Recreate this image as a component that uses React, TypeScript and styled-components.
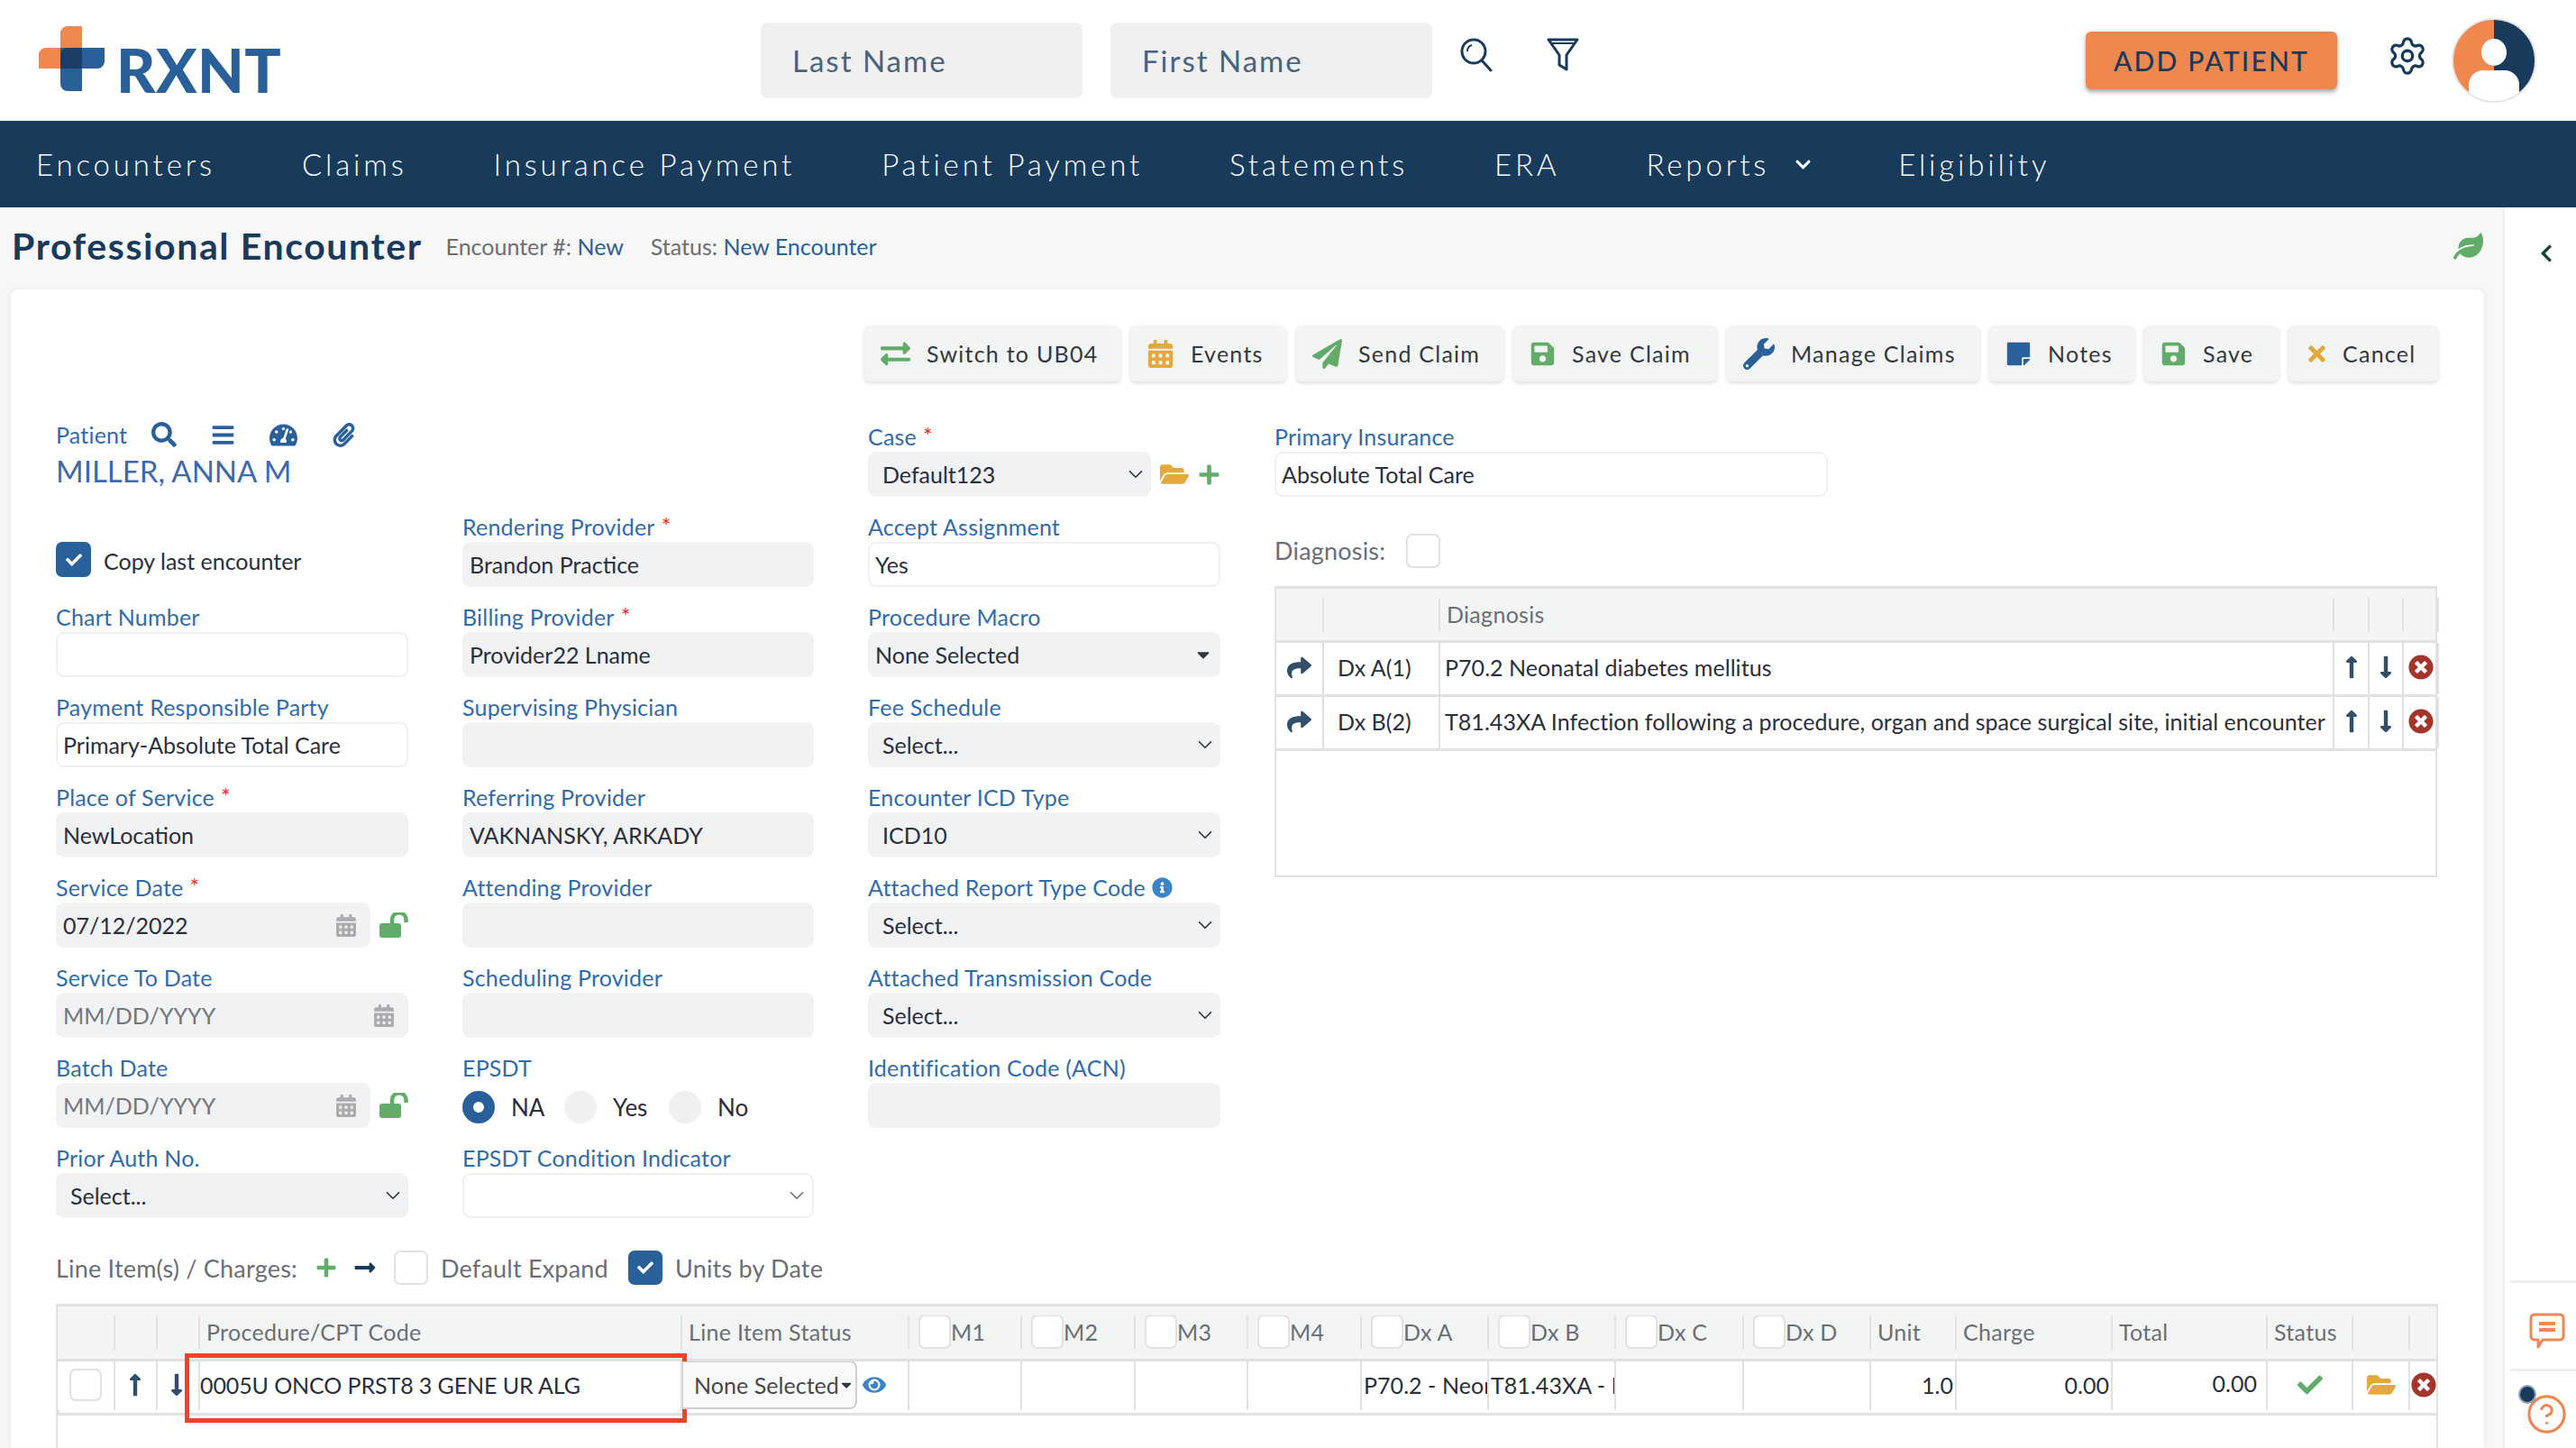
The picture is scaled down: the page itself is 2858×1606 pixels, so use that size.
import React from 'react'
import styled, { createGlobalStyle } from 'styled-components'
import {
  FaCalendarAlt,
  FaBars,
  FaCaretDown,
  FaCheck,
  FaChevronDown,
  FaChevronLeft,
  FaExchangeAlt,
  FaEye,
  FaFolderOpen,
  FaInfoCircle,
  FaLeaf,
  FaLongArrowAltDown,
  FaLongArrowAltRight,
  FaLongArrowAltUp,
  FaPaperPlane,
  FaPaperclip,
  FaPlus,
  FaSave,
  FaSearch,
  FaShare,
  FaStickyNote,
  FaTachometerAlt,
  FaTimes,
  FaTimesCircle,
  FaWrench,
} from 'react-icons/fa'
import { ChevronDown, CircleHelp, Settings } from 'lucide-react'

const GlobalStyle = createGlobalStyle`
  html, body {
    margin: 0;
    padding: 0;
    background: #fff;
  }
  * {
    box-sizing: border-box;
  }
`

const navy = '#183a5b'
const blue = '#2a6099'
const orange = '#f0874f'
const green = '#62ac69'
const amber = '#e5a83e'
const red = '#a4352c'
const line = '#e0e2e2'
const labelBlue = '#2f6cab'
const ink = '#2a2f3c'

const Page = styled.div`
  width: 2858px;
  height: 1606px;
  overflow: hidden;
  display: flex;
  flex-direction: column;
  font-family: 'Lato', 'Liberation Sans', sans-serif;
  font-size: 25px;
  color: ${ink};
`

const Header = styled.header`
  height: 134px;
  flex: none;
  display: flex;
  align-items: center;
  padding: 0 43px 0 43px;
`

const LogoWrap = styled.div`
  width: 801px;
  display: flex;
  align-items: flex-end;
  height: 72px;
  margin-top: -4px;
`

const LogoText = styled.span`
  font-size: 67px;
  font-weight: 900;
  line-height: 48px;
  height: 48px;
  color: ${blue};
  letter-spacing: 0.5px;
  margin-left: 13px;
`

const SearchInput = styled.input`
  width: 357px;
  height: 84px;
  border: 0;
  outline: 0;
  border-radius: 8px;
  background: #f0f0f0;
  padding: 0 35px;
  margin-right: 31px;
  font-family: inherit;
  font-size: 33px;
  letter-spacing: 2px;
  &::placeholder {
    color: #47637d;
    opacity: 1;
  }
`

const HeaderIcon = styled.svg<{ $gap?: number }>`
  flex: none;
  margin-top: -12px;
  margin-left: ${(p) => p.$gap ?? 0}px;
`

const AddPatient = styled.button`
  margin-left: auto;
  width: 279px;
  height: 64px;
  border: 0;
  border-radius: 6px;
  background: ${orange};
  box-shadow: 0 3px 5px rgba(0, 0, 0, 0.35);
  color: ${navy};
  font-family: inherit;
  font-size: 30px;
  font-weight: 500;
  letter-spacing: 2.2px;
  white-space: nowrap;
  padding: 0;
`

const GearWrap = styled.div`
  display: flex;
  margin: -10px 25px 0 55px;
  color: ${navy};
`

const Nav = styled.nav`
  height: 96px;
  flex: none;
  background: ${navy};
  display: flex;
  align-items: center;
  padding-left: 40px;
  gap: 96px;
`

const NavItem = styled.a`
  display: flex;
  align-items: center;
  gap: 28px;
  color: #fff;
  font-size: 33px;
  font-weight: 300;
  letter-spacing: 3.85px;
  white-space: nowrap;
`

const Body = styled.div`
  flex: 1;
  min-height: 0;
  display: flex;
`

const Main = styled.main`
  width: 2777px;
  flex: none;
  background: #f7f7f7;
  padding: 0 21px 0 12px;
  display: flex;
  flex-direction: column;
`

const TitleRow = styled.div`
  height: 91px;
  flex: none;
  display: flex;
  align-items: center;
  padding: 0 1px 6px 1px;
`

const Title = styled.h1`
  margin: 0 26px 0 0;
  font-size: 41px;
  font-weight: 700;
  color: ${navy};
  letter-spacing: 1.6px;
  white-space: nowrap;
`

const Meta = styled.span`
  color: #6a6f76;
  font-size: 25px;
  margin-right: 30px;
  & b {
    font-weight: 400;
    color: ${blue};
  }
`

const LeafIcon = styled(FaLeaf)`
  margin-left: auto;
  width: 33px;
  height: 30px;
  color: ${green};
`

const Card = styled.section`
  flex: 1;
  min-height: 0;
  background: #fff;
  border-radius: 8px 8px 0 0;
  box-shadow: 0 0 6px rgba(0, 0, 0, 0.07);
  padding: 40px 51px 0 50px;
  display: flex;
  flex-direction: column;
`

const Toolbar = styled.div`
  display: flex;
  justify-content: flex-end;
  gap: 11px;
  height: 62px;
  flex: none;
  margin-bottom: 44px;
`

const ToolButton = styled.button<{ $w: number; $gap?: number }>`
  width: ${(p) => p.$w}px;
  height: 62px;
  display: flex;
  align-items: center;
  gap: ${(p) => p.$gap ?? 18}px;
  padding: 0 0 0 18px;
  border: 0;
  border-radius: 6px;
  background: #f3f5f4;
  box-shadow: 0 2px 4px rgba(0, 0, 0, 0.14);
  font-family: inherit;
  font-size: 25px;
  letter-spacing: 1.25px;
  color: #33373f;
  white-space: nowrap;
`

const FormGrid = styled.div`
  display: grid;
  grid-template-columns: 391px 390px 391px 1290px;
  column-gap: 60px;
  height: 900px;
  flex: none;
`

const Column = styled.div`
  display: flex;
  flex-direction: column;
  min-width: 0;
`

const PatientBlock = styled.div`
  height: 134px;
  flex: none;
  padding-top: 3px;
`

const PatientRow = styled.div`
  height: 24px;
  display: flex;
  align-items: center;
  gap: 27px;
  color: ${labelBlue};
  letter-spacing: 0.2px;
`

const PatientIcons = styled.span`
  display: flex;
  align-items: center;
  gap: 38px;
  color: ${blue};
`

const PatientName = styled.div`
  height: 44px;
  line-height: 44px;
  margin-top: 6px;
  font-size: 33px;
  color: #3f68b0;
  white-space: nowrap;
`

const CopyRow = styled.label`
  height: 66px;
  flex: none;
  display: flex;
  align-items: flex-start;
  gap: 14px;
  line-height: 42px;
`

const Check = styled.span<{ $on?: boolean; $size?: number }>`
  width: ${(p) => p.$size ?? 38}px;
  height: ${(p) => p.$size ?? 38}px;
  flex: none;
  display: inline-flex;
  align-items: center;
  justify-content: center;
  border-radius: 7px;
  background: ${(p) => (p.$on ? blue : '#fff')};
  border: ${(p) => (p.$on ? '0' : `2px solid ${line}`)};
  color: #fff;
`

const Spacer = styled.div`
  height: 100px;
  flex: none;
`

const FieldWrap = styled.div`
  height: 100px;
  flex: none;
`

const Label = styled.div`
  height: 34px;
  line-height: 34px;
  color: ${labelBlue};
  white-space: nowrap;
  letter-spacing: 0.2px;
  display: flex;
  align-items: center;
  gap: 7px;
  & i {
    color: #ee2b24;
    font-style: normal;
    margin-top: -3px;
  }
`

const InputRow = styled.div`
  display: flex;
  align-items: center;
  gap: 10px;
`

const Box = styled.div<{ $white?: boolean; $pad?: number; $muted?: boolean }>`
  flex: 1;
  min-width: 0;
  height: 50px;
  border-radius: 9px;
  display: flex;
  align-items: center;
  white-space: nowrap;
  padding: 0 8px 0 ${(p) => p.$pad ?? (p.$white ? 6 : 8)}px;
  background: ${(p) => (p.$white ? '#fff' : '#f1f2f4')};
  border: ${(p) => (p.$white ? '2px solid #eff0f1' : '0')};
  color: ${(p) => (p.$muted ? '#73777d' : ink)};
  & > svg {
    margin-left: auto;
  }
`

const InsuranceBox = styled(Box)`
  width: 614px;
  flex: none;
`

const CalendarGlyph = styled(FaCalendarAlt)`
  width: 22px;
  height: 25px;
  color: #a9abad;
  margin-right: 8px;
`

const Chevron = styled(ChevronDown)<{ $faint?: boolean }>`
  color: ${(p) => (p.$faint ? '#70757c' : '#33373f')};
  margin-right: -4px;
`

const UnlockSvg = styled.svg`
  flex: none;
  width: 32px;
  height: 28px;
  color: ${green};
`

const RadioRow = styled.div`
  height: 50px;
  margin-top: 2px;
  display: flex;
  align-items: center;
  font-size: 26px;
`

const Radio = styled.span<{ $on?: boolean }>`
  width: 36px;
  height: 36px;
  border-radius: 50%;
  flex: none;
  background: ${(p) => (p.$on ? '#fff' : '#f0f0f0')};
  border: ${(p) => (p.$on ? `12px solid ${blue}` : '0')};
  margin-right: 18px;
`

const RadioText = styled.span<{ $w: number }>`
  width: ${(p) => p.$w}px;
`

const DiagnosisRow = styled.div`
  display: flex;
  align-items: center;
  gap: 23px;
  height: 39px;
  margin: 24px 0 20px;
  color: #6a6f76;
  font-size: 27px;
  letter-spacing: 0.2px;
`

const GridTable = styled.div<{ $h?: number; $grow?: boolean }>`
  border: 2px solid ${line};
  border-top-width: 3px;
  ${(p) => (p.$h ? `height: ${p.$h}px;` : '')}
  ${(p) => (p.$grow ? 'flex: 1; border-bottom: 0;' : '')}
`

const TableRow = styled.div<{ $cols: string; $head?: boolean; $h: number }>`
  display: grid;
  grid-template-columns: ${(p) => p.$cols};
  height: ${(p) => p.$h}px;
  background: ${(p) => (p.$head ? '#f3f5f4' : '#fff')};
  border-bottom: 3px solid ${line};
`

const HeadCell = styled.div`
  align-self: start;
  margin-top: 10px;
  height: 38px;
  display: flex;
  align-items: center;
  padding: 0 0 2px 7px;
  border-left: 2px solid ${line};
  color: #6a6f76;
  letter-spacing: 0.3px;
  white-space: nowrap;
  overflow: hidden;
  &:first-child {
    border-left: 0;
  }
`

const Cell = styled.div<{ $align?: string; $pad?: string }>`
  display: flex;
  align-items: center;
  justify-content: ${(p) => p.$align ?? 'flex-start'};
  padding: ${(p) => p.$pad ?? '0 0 3px'};
  border-left: 2px solid ${line};
  letter-spacing: 0.05px;
  white-space: nowrap;
  overflow: hidden;
  min-width: 0;
  position: relative;
  &:first-child {
    border-left: 0;
  }
`

const HighlightCell = styled(Cell)`
  overflow: visible;
  letter-spacing: -0.1px;
`

const Highlight = styled.span`
  position: absolute;
  top: -9px;
  bottom: -14px;
  left: -17px;
  right: -7px;
  border: 5px solid #ee4425;
  pointer-events: none;
`

const Arrow = styled.span`
  display: inline-flex;
  color: #2f4f6b;
`

const RemoveIcon = styled(FaTimesCircle)`
  width: 28px;
  height: 28px;
  color: ${red};
`

const ChargesRow = styled.div`
  height: 38px;
  flex: none;
  margin: 20px 0 21px;
  display: flex;
  align-items: center;
  color: #6a6f76;
  font-size: 27px;
  letter-spacing: 0.2px;
`

const ChargesText = styled.span<{ $w: number }>`
  width: ${(p) => p.$w}px;
  flex: none;
  white-space: nowrap;
`

const ChargeArrow = styled(FaLongArrowAltRight)`
  margin: 0 19px 0 18px;
  color: ${navy};
`

const ChargeCheck = styled(Check)`
  margin-right: 14px;
`

const StatusSelect = styled.div`
  width: 194px;
  height: 54px;
  flex: none;
  display: flex;
  align-items: center;
  justify-content: space-between;
  padding: 0 2px 0 12px;
  border: 2px solid #cfd0d1;
  border-left-width: 1px;
  border-radius: 0 8px 8px 0;
  background: #fafafa;
  color: #45484e;
`

const EyeIcon = styled(FaEye)`
  width: 26px;
  height: 26px;
  margin-left: 6px;
  color: #3a85c9;
`

const Sidebar = styled.aside`
  flex: 1;
  background: #fff;
  border-left: 2px solid #ececec;
  display: flex;
  flex-direction: column;
  position: relative;
`

const SideTop = styled.div`
  height: 91px;
  flex: none;
  display: flex;
  align-items: center;
  padding: 10px 0 0 35px;
  color: #17443a;
`

const SideDivider = styled.div<{ $top: number }>`
  height: 3px;
  flex: none;
  background: #eeeeee;
  margin: ${(p) => p.$top}px 0 0 6px;
`

const SideIcon = styled.div<{ $top: number; $left: number }>`
  margin: ${(p) => p.$top}px 0 0 ${(p) => p.$left}px;
  display: flex;
  position: relative;
  color: ${orange};
`

const NoticeDot = styled.span`
  position: absolute;
  left: -8px;
  top: -9px;
  width: 20px;
  height: 21px;
  border-radius: 50%;
  background: ${navy};
  border: 2px solid #8fa3b5;
`

type FieldProps = {
  label: React.ReactNode
  required?: boolean
  children?: React.ReactNode
}

const Field = ({ label, required, children }: FieldProps) => (
  <FieldWrap>
    <Label>
      {label}
      {required && <i>*</i>}
    </Label>
    {children}
  </FieldWrap>
)

const TextField = ({
  label,
  value,
  required,
  white,
}: FieldProps & { value?: string; white?: boolean }) => (
  <Field label={label} required={required}>
    <Box $white={white}>{value}</Box>
  </Field>
)

const SelectField = ({
  label,
  value,
  required,
  white,
}: FieldProps & { value?: string; white?: boolean }) => (
  <Field label={label} required={required}>
    <Box $pad={16} $white={white}>
      {value}
      <Chevron size={26} strokeWidth={1.6} $faint={white} />
    </Box>
  </Field>
)

const UnlockIcon = () => (
  <UnlockSvg viewBox="0 0 32 28">
    <rect x="0" y="12" width="24" height="16" rx="3" fill="currentColor" />
    <path d="M14 13V8a6.5 6.5 0 0 1 15.5 0v3" fill="none" stroke="currentColor" strokeWidth="4.5" />
  </UnlockSvg>
)

const DateField = ({
  label,
  value,
  required,
  unlock,
}: FieldProps & { value: string; unlock?: boolean }) => (
  <Field label={label} required={required}>
    <InputRow>
      <Box $muted={value === 'MM/DD/YYYY'}>
        {value}
        <CalendarGlyph />
      </Box>
      {unlock && <UnlockIcon />}
    </InputRow>
  </Field>
)

const tools = [
  { label: 'Switch to UB04', w: 284, icon: <FaExchangeAlt size={33} color={green} /> },
  { label: 'Events', w: 173, icon: <FaCalendarAlt size={31} color={amber} /> },
  { label: 'Send Claim', w: 230, icon: <FaPaperPlane size={33} color={green} /> },
  { label: 'Save Claim', w: 226, icon: <FaSave size={29} color={green} /> },
  { label: 'Manage Claims', w: 280, icon: <FaWrench size={35} color={blue} /> },
  { label: 'Notes', w: 161, icon: <FaStickyNote size={29} color={blue} /> },
  { label: 'Save', w: 149, icon: <FaSave size={29} color={green} /> },
  { label: 'Cancel', w: 166, gap: 15, icon: <FaTimes size={27} color={amber} /> },
]

const diagnosisCols = '51px 129px 992px 39px 38px 39px 1fr'
const diagnosisRows = [
  { code: 'Dx A(1)', text: 'P70.2 Neonatal diabetes mellitus' },
  {
    code: 'Dx B(2)',
    text: 'T81.43XA Infection following a procedure, organ and space surgical site, initial encounter',
  },
]

const chargeCols =
  '62px 47px 47px 535px 252px 125px 126px 125px 126px 141px 141px 142px 141px 95px 173px 172px 95px 63px 1fr'
const chargeHead: { text: string; check?: boolean }[] = [
  { text: '' },
  { text: '' },
  { text: '' },
  { text: 'Procedure/CPT Code' },
  { text: 'Line Item Status' },
  { text: 'M1', check: true },
  { text: 'M2', check: true },
  { text: 'M3', check: true },
  { text: 'M4', check: true },
  { text: 'Dx A', check: true },
  { text: 'Dx B', check: true },
  { text: 'Dx C', check: true },
  { text: 'Dx D', check: true },
  { text: 'Unit' },
  { text: 'Charge' },
  { text: 'Total' },
  { text: 'Status' },
  { text: '' },
  { text: '' },
]

const HeadCheck = styled(Check)`
  width: 36px;
  height: 38px;
  margin-left: 3px;
`

const App = () => {
  return (
    <Page>
      <GlobalStyle />
      <Header>
        <LogoWrap>
          <svg width="73" height="72" viewBox="0 0 73 72">
            <path d="M24 24V8a8 8 0 0 1 8-8h16v24z" fill={orange} />
            <path d="M0 47V32a8 8 0 0 1 8-8h16v23z" fill={orange} />
            <path d="M24 24h49v15a8 8 0 0 1-8 8H48v25H32a8 8 0 0 1-8-8z" fill={blue} />
            <path d="M32 24h16v23H24V32a8 8 0 0 1 8-8z" fill="#1a3e66" />
          </svg>
          <LogoText>RXNT</LogoText>
        </LogoWrap>
        <SearchInput placeholder="Last Name" />
        <SearchInput placeholder="First Name" />
        <HeaderIcon width="36" height="38" viewBox="0 0 36 38" fill="none" stroke={navy} strokeWidth="3">
          <circle cx="15" cy="15" r="13" />
          <path d="M24 25l10 11" strokeLinecap="round" />
          <path d="M8 15a7 7 0 0 1 5-7" strokeWidth="2" />
        </HeaderIcon>
        <HeaderIcon
          $gap={60}
          width="36"
          height="38"
          viewBox="0 0 36 38"
          fill="none"
          stroke={navy}
          strokeWidth="3"
          strokeLinejoin="round"
        >
          <path d="M2 2h32L22 19v16l-8-5V19z" />
          <path d="M5 6h26" strokeWidth="2" />
        </HeaderIcon>
        <AddPatient>ADD PATIENT</AddPatient>
        <GearWrap>
          <Settings size={46} strokeWidth={1.7} />
        </GearWrap>
        <svg width="96" height="96" viewBox="0 0 96 96">
          <defs>
            <clipPath id="avatar-clip">
              <circle cx="48" cy="48" r="46" />
            </clipPath>
          </defs>
          <g clipPath="url(#avatar-clip)">
            <rect width="48" height="96" fill={orange} />
            <rect x="48" width="48" height="96" fill={navy} />
            <ellipse cx="48" cy="39" rx="14" ry="15" fill="#fff" />
            <path d="M20 96V75a16 16 0 0 1 16-16h24a16 16 0 0 1 16 16v21z" fill="#fff" />
          </g>
          <circle cx="48" cy="48" r="46" fill="none" stroke="#e6e6e6" strokeWidth="2" />
        </svg>
      </Header>
      <Nav>
        <NavItem>Encounters</NavItem>
        <NavItem>Claims</NavItem>
        <NavItem>Insurance Payment</NavItem>
        <NavItem>Patient Payment</NavItem>
        <NavItem>Statements</NavItem>
        <NavItem>ERA</NavItem>
        <NavItem>
          Reports <FaChevronDown size={19} />
        </NavItem>
        <NavItem>Eligibility</NavItem>
      </Nav>
      <Body>
        <Main>
          <TitleRow>
            <Title>Professional Encounter</Title>
            <Meta>
              Encounter #: <b>New</b>
            </Meta>
            <Meta>
              Status: <b>New Encounter</b>
            </Meta>
            <LeafIcon />
          </TitleRow>
          <Card>
            <Toolbar>
              {tools.map((t) => (
                <ToolButton key={t.label} $w={t.w} $gap={t.gap}>
                  {t.icon}
                  {t.label}
                </ToolButton>
              ))}
            </Toolbar>
            <FormGrid>
              <Column>
                <PatientBlock>
                  <PatientRow>
                    Patient
                    <PatientIcons>
                      <FaSearch size={28} />
                      <FaBars size={27} />
                      <FaTachometerAlt size={31} />
                      <FaPaperclip size={27} />
                    </PatientIcons>
                  </PatientRow>
                  <PatientName>MILLER, ANNA M</PatientName>
                </PatientBlock>
                <CopyRow>
                  <Check $on $size={39}>
                    <FaCheck size={18} />
                  </Check>
                  Copy last encounter
                </CopyRow>
                <TextField label="Chart Number" white />
                <TextField label="Payment Responsible Party" value="Primary-Absolute Total Care" white />
                <TextField label="Place of Service" value="NewLocation" required />
                <DateField label="Service Date" value="07/12/2022" required unlock />
                <DateField label="Service To Date" value="MM/DD/YYYY" />
                <DateField label="Batch Date" value="MM/DD/YYYY" unlock />
                <SelectField label="Prior Auth No." value="Select..." />
              </Column>
              <Column>
                <Spacer />
                <TextField label="Rendering Provider" value="Brandon Practice" required />
                <TextField label="Billing Provider" value="Provider22 Lname" required />
                <TextField label="Supervising Physician" />
                <TextField label="Referring Provider" value="VAKNANSKY, ARKADY" />
                <TextField label="Attending Provider" />
                <TextField label="Scheduling Provider" />
                <Field label="EPSDT">
                  <RadioRow>
                    <Radio $on />
                    <RadioText $w={59}>NA</RadioText>
                    <Radio />
                    <RadioText $w={62}>Yes</RadioText>
                    <Radio />
                    <RadioText $w={40}>No</RadioText>
                  </RadioRow>
                </Field>
                <SelectField label="EPSDT Condition Indicator" white />
              </Column>
              <Column>
                <Field label="Case" required>
                  <InputRow>
                    <Box $pad={16}>
                      Default123
                      <Chevron size={26} strokeWidth={1.6} />
                    </Box>
                    <FaFolderOpen size={32} color={amber} />
                    <FaPlus size={25} color={green} />
                  </InputRow>
                </Field>
                <TextField label="Accept Assignment" value="Yes" white />
                <Field label="Procedure Macro">
                  <Box>
                    None Selected
                    <FaCaretDown size={22} color="#33373f" />
                  </Box>
                </Field>
                <SelectField label="Fee Schedule" value="Select..." />
                <SelectField label="Encounter ICD Type" value="ICD10" />
                <SelectField
                  label={
                    <>
                      Attached Report Type Code <FaInfoCircle size={23} color="#3a85c9" />
                    </>
                  }
                  value="Select..."
                />
                <SelectField label="Attached Transmission Code" value="Select..." />
                <TextField label="Identification Code (ACN)" />
              </Column>
              <Column>
                <FieldWrap>
                  <Label>Primary Insurance</Label>
                  <InsuranceBox $white>Absolute Total Care</InsuranceBox>
                </FieldWrap>
                <DiagnosisRow>
                  Diagnosis:
                  <Check />
                </DiagnosisRow>
                <GridTable $h={323}>
                  <TableRow $cols={diagnosisCols} $head $h={60}>
                    <HeadCell />
                    <HeadCell />
                    <HeadCell>Diagnosis</HeadCell>
                    <HeadCell />
                    <HeadCell />
                    <HeadCell />
                    <HeadCell />
                  </TableRow>
                  {diagnosisRows.map((r) => (
                    <TableRow key={r.code} $cols={diagnosisCols} $h={60}>
                      <Cell $align="center">
                        <Arrow>
                          <FaShare size={27} />
                        </Arrow>
                      </Cell>
                      <Cell $pad="0 0 3px 15px">{r.code}</Cell>
                      <Cell $pad="0 0 3px 5px">{r.text}</Cell>
                      <Cell $align="center">
                        <Arrow>
                          <FaLongArrowAltUp size={28} />
                        </Arrow>
                      </Cell>
                      <Cell $align="center">
                        <Arrow>
                          <FaLongArrowAltDown size={28} />
                        </Arrow>
                      </Cell>
                      <Cell $align="center">
                        <RemoveIcon />
                      </Cell>
                      <Cell />
                    </TableRow>
                  ))}
                </GridTable>
              </Column>
            </FormGrid>
            <ChargesRow>
              <ChargesText $w={288}>Line Item(s) / Charges:</ChargesText>
              <FaPlus size={24} color={green} />
              <ChargeArrow size={26} />
              <ChargeCheck />
              <ChargesText $w={208}>Default Expand</ChargesText>
              <ChargeCheck $on>
                <FaCheck size={18} />
              </ChargeCheck>
              <ChargesText $w={170}>Units by Date</ChargesText>
            </ChargesRow>
            <GridTable $grow>
              <TableRow $cols={chargeCols} $head $h={61}>
                {chargeHead.map((h, i) => (
                  <HeadCell key={i}>
                    {h.check && <HeadCheck />}
                    {h.text}
                  </HeadCell>
                ))}
              </TableRow>
              <TableRow $cols={chargeCols} $h={60}>
                <Cell $align="center">
                  <Check $size={36} />
                </Cell>
                <Cell $align="center" $pad="0 2px 3px 0">
                  <Arrow>
                    <FaLongArrowAltUp size={28} />
                  </Arrow>
                </Cell>
                <Cell $align="center" $pad="0 4px 3px 0">
                  <Arrow>
                    <FaLongArrowAltDown size={28} />
                  </Arrow>
                </Cell>
                <HighlightCell>
                  0005U ONCO PRST8 3 GENE UR ALG
                  <Highlight />
                </HighlightCell>
                <Cell>
                  <StatusSelect>
                    None Selected
                    <FaCaretDown size={18} color="#33373f" />
                  </StatusSelect>
                  <EyeIcon />
                </Cell>
                <Cell />
                <Cell />
                <Cell />
                <Cell />
                <Cell $pad="0 0 3px 2px">P70.2 - Neonatal</Cell>
                <Cell $pad="0 0 3px 2px">T81.43XA - Infection</Cell>
                <Cell />
                <Cell />
                <Cell $align="flex-end" $pad="0 2px 3px 0">
                  1.0
                </Cell>
                <Cell $align="flex-end" $pad="0 2px 3px 0">
                  0.00
                </Cell>
                <Cell $align="flex-end" $pad="0 10px 6px 0">
                  0.00
                </Cell>
                <Cell $align="center">
                  <FaCheck size={28} color={green} />
                </Cell>
                <Cell $align="center">
                  <FaFolderOpen size={32} color={amber} />
                </Cell>
                <Cell $align="center">
                  <RemoveIcon />
                </Cell>
                <Cell />
              </TableRow>
            </GridTable>
          </Card>
        </Main>
        <Sidebar>
          <SideTop>
            <FaChevronLeft size={22} />
          </SideTop>
          <SideDivider $top={1099} />
          <SideIcon $top={33} $left={27}>
            <svg width="40" height="44" viewBox="0 0 40 44" fill="none" stroke={orange} strokeWidth="3">
              <path d="M6 2h28a4 4 0 0 1 4 4v20a4 4 0 0 1-4 4H15l-5 8v-8H6a4 4 0 0 1-4-4V6a4 4 0 0 1 4-4z" strokeLinejoin="round" />
              <path d="M11 12h18M11 19h18" strokeWidth="4" />
            </svg>
          </SideIcon>
          <SideDivider $top={18} />
          <SideIcon $top={24} $left={23}>
            <CircleHelp size={47} strokeWidth={1.6} />
            <NoticeDot />
          </SideIcon>
        </Sidebar>
      </Body>
    </Page>
  )
}

export default App
